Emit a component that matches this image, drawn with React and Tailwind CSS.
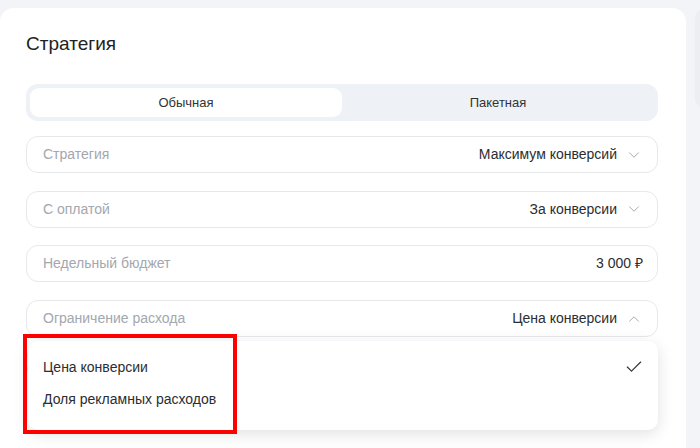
import { ChevronDown, ChevronUp, Check } from "lucide-react";

function Field({ label, value, icon }) {
  return (
    <div className="flex h-[37px] items-center justify-between rounded-[12px] border border-[#e6e8ec] bg-white pl-[16px] pr-[14px]">
      <span className="text-[#a3a7ae]">{label}</span>
      <span className="flex items-center gap-[8px] text-[#2b2d31]">
        {value}
        {icon}
      </span>
    </div>
  );
}

export default function App() {
  return (
    <div
      className="relative h-[448px] w-[700px] overflow-hidden bg-[#f3f4f7] text-[14px]"
      style={{ fontFamily: '"Liberation Sans", Arial, sans-serif' }}
    >
      <div className="absolute left-[695px] top-[8px] h-[100px] w-[20px] rounded-[10px] bg-[#eceef2]" />
      <div className="ml-0 mt-[8px] h-[460px] w-[686px] rounded-[14px] bg-white pl-[26px] pr-[28px] pt-[25px]">
        <h1 className="text-[19px] leading-[22px] text-[#222]">Стратегия</h1>
        <div className="mt-[29px] flex h-[37px] rounded-[12px] bg-[#eef1f5] p-[4px]">
          <div className="flex w-[312px] items-center justify-center rounded-[9px] bg-white text-[13px] text-[#333]">Обычная</div>
          <div className="flex flex-1 items-center justify-center text-[13px] text-[#333]">Пакетная</div>
        </div>
        <div className="mt-[15px] flex flex-col gap-[17.7px]">
          <Field label="Стратегия" value="Максимум конверсий" icon={<ChevronDown size={18} strokeWidth={1.2} color="#9aa0a8" />} />
          <Field label="С оплатой" value="За конверсии" icon={<ChevronDown size={18} strokeWidth={1.2} color="#9aa0a8" />} />
          <Field label="Недельный бюджет" value="3 000 ₽" icon={null} />
          <Field label="Ограничение расхода" value="Цена конверсии" icon={<ChevronUp size={18} strokeWidth={1.2} color="#9aa0a8" />} />
        </div>
        <div className="mt-[10px] h-[30px] rounded-[12px] border border-[#e6e8ec]" />
      </div>
      <div className="absolute left-[28px] top-[341px] h-[89px] w-[630px] rounded-[10px] bg-white shadow-[0_4px_16px_rgba(0,0,0,0.12)]">
        <div className="flex h-[48px] items-center justify-between pl-[15px] pr-[14px] pt-[4px] text-[#2b2d31]">
          <span>Цена конверсии</span>
          <Check size={20} strokeWidth={1.4} color="#333" />
        </div>
        <div className="pl-[15px] text-[#2b2d31]">Доля рекламных расходов</div>
      </div>
      <div className="absolute left-[23px] top-[334px] h-[100px] w-[214px] border-[4px] border-[#f00]" />
    </div>
  );
}
